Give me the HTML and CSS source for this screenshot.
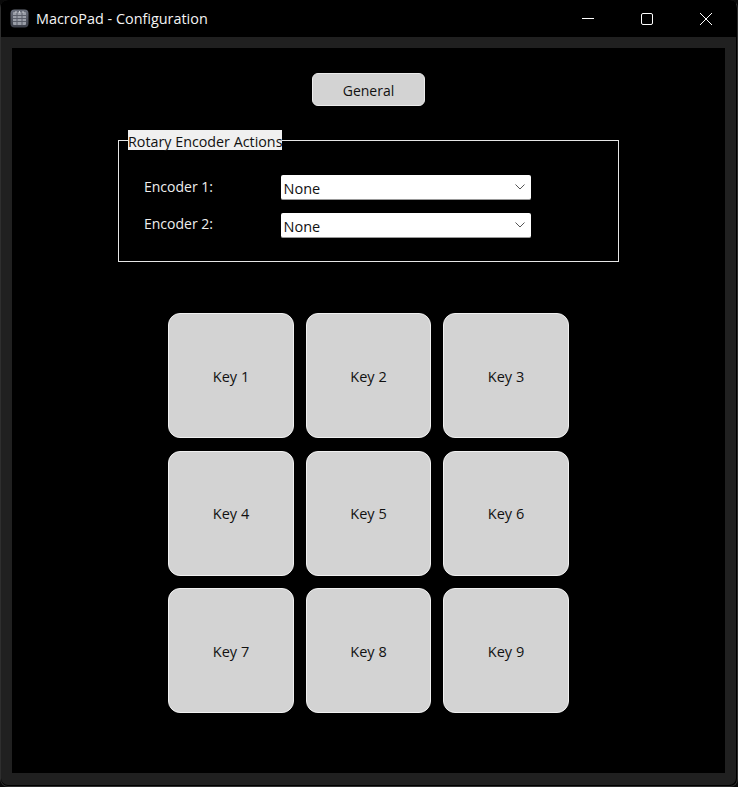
FILE: index.html
```html
<!DOCTYPE html>
<html lang="en">
<head>
<meta charset="utf-8">
<title>MacroPad - Configuration</title>
<link rel="stylesheet" href="styles.css">
</head>
<body>
<div class="window">
  <header class="titlebar">
    <div class="title-left">
      <svg class="app-icon" width="19" height="19" viewBox="0 0 19 19">
        <defs><linearGradient id="ig" x1="0" y1="0" x2="0" y2="1"><stop offset="0" stop-color="#6a6f7c"/><stop offset="1" stop-color="#3c3f49"/></linearGradient></defs>
        <rect x="0.5" y="0.5" width="18" height="18" rx="4" fill="url(#ig)"/>
        <rect x="3" y="3" width="13" height="13" rx="1" fill="#9a9ea8"/>
        <path d="M3 6.5H16M3 9.5H16M3 12.5H16M7 3V16M12 3V16" stroke="#5b5f6a" stroke-width="1" fill="none"/>
        <path d="M6 2V4M9.5 2V4M13 2V4" stroke="#c8cad0" stroke-width="1" fill="none"/>
      </svg>
      <span class="title-text">MacroPad - Configuration</span>
    </div>
    <div class="controls">
      <div class="ctl"><svg width="12" height="12" viewBox="0 0 12 12"><path d="M0 5.5H12" stroke="#fff" stroke-width="1"/></svg></div>
      <div class="ctl"><svg width="12" height="12" viewBox="0 0 12 12"><rect x="0.5" y="0.5" width="11" height="11" rx="1.5" fill="none" stroke="#fff" stroke-width="1"/></svg></div>
      <div class="ctl"><svg width="12" height="12" viewBox="0 0 12 12"><path d="M0 0L12 12M12 0L0 12" stroke="#fff" stroke-width="1"/></svg></div>
    </div>
  </header>
  <div class="frame">
    <main class="content">
      <button class="general">General</button>
      <fieldset class="group">
        <legend class="legend">Rotary Encoder Actions</legend>
        <div class="row">
          <label class="enc-label enc-first">Encoder 1:</label>
          <div class="combo"><span>None</span><svg width="10" height="6" viewBox="0 0 10 6"><path d="M0.5 0.5L5 5L9.5 0.5" fill="none" stroke="#555" stroke-width="1"/></svg></div>
        </div>
        <div class="row">
          <label class="enc-label">Encoder 2:</label>
          <div class="combo"><span>None</span><svg width="10" height="6" viewBox="0 0 10 6"><path d="M0.5 0.5L5 5L9.5 0.5" fill="none" stroke="#555" stroke-width="1"/></svg></div>
        </div>
      </fieldset>
      <div class="keys">
        <button class="key">Key 1</button>
        <button class="key">Key 2</button>
        <button class="key">Key 3</button>
        <button class="key">Key 4</button>
        <button class="key">Key 5</button>
        <button class="key">Key 6</button>
        <button class="key">Key 7</button>
        <button class="key">Key 8</button>
        <button class="key">Key 9</button>
      </div>
    </main>
  </div>
</div>
</body>
</html>
```
FILE: styles.css
```css
html, body {
  margin: 0;
  padding: 0;
  background: #0a0a0a;
}
body {
  width: 738px;
  height: 787px;
  overflow: hidden;
  font-family: "Open Sans", "Noto Sans", "Liberation Sans", sans-serif;
  font-size: 14px;
}
.window {
  box-sizing: border-box;
  width: 738px;
  height: 787px;
  padding: 0 2px 2px 1px;
  background: #000;
  border-radius: 8px;
  box-shadow: inset 0 0 0 1px #2e2e2e;
  display: flex;
  flex-direction: column;
  overflow: hidden;
}
.titlebar {
  height: 37px;
  flex: none;
  display: flex;
  justify-content: space-between;
  align-items: stretch;
  background: #000;
  color: #fff;
}
.title-left {
  display: flex;
  align-items: center;
  padding-left: 9px;
  gap: 7px;
}
.app-icon { display: block; }
.title-text { font-size: 14.4px; color: #f4f4f4; }
.controls { display: flex; padding-right: 1px; }
.ctl {
  width: 59px;
  display: flex;
  align-items: center;
  justify-content: center;
}
.frame {
  flex: 1;
  padding: 11px 11px 12px;
  background: #202020;
  border-radius: 0 0 7px 7px;
  display: flex;
}
.content {
  flex: 1;
  background: #000;
  display: flex;
  flex-direction: column;
  align-items: center;
  padding-top: 25px;
  box-sizing: border-box;
}
.general {
  box-sizing: border-box;
  width: 113px;
  height: 33px;
  border: 1px solid #ececec;
  border-radius: 6px;
  background: #d3d3d3;
  color: #111;
  font: inherit;
  padding: 1px 0 0;
}
.group {
  box-sizing: border-box;
  width: 501px;
  height: 132px;
  margin: 24px 0 0;
  padding: 0 9px;
  border: 1px solid #e6e6e6;
  min-inline-size: 0;
}
.legend {
  box-sizing: border-box;
  height: 20px;
  padding: 0;
  line-height: 23px;
  font-size: 14.3px;
  background: #f0f0f0;
  color: #111;
  margin-bottom: 25px;
}
.row {
  display: flex;
  align-items: center;
  height: 25px;
  margin-bottom: 13px;
  padding-left: 16px;
}
.enc-label {
  width: 137px;
  color: #eee;
  position: relative;
  top: -2px;
}
.enc-first { top: -1px; }
.combo {
  box-sizing: border-box;
  width: 250px;
  height: 25px;
  background: #fff;
  border-bottom: 1px solid #999;
  border-radius: 2px;
  color: #111;
  display: flex;
  align-items: center;
  justify-content: space-between;
  padding: 0 6px 0 2.5px;
  font-size: 14.5px;
}
.combo span { position: relative; top: 1px; }
.combo svg { position: relative; top: 0; }
.keys {
  display: grid;
  grid-template-columns: repeat(3, 125.5px);
  grid-auto-rows: 125px;
  column-gap: 12px;
  row-gap: 12.5px;
  margin-top: 51px;
}
.key {
  box-sizing: border-box;
  border: 1px solid #f0f0f0;
  border-radius: 12px;
  background: #d3d3d3;
  color: #111;
  font: inherit;
  font-size: 14.5px;
  padding: 1px 0 0;
}
```
